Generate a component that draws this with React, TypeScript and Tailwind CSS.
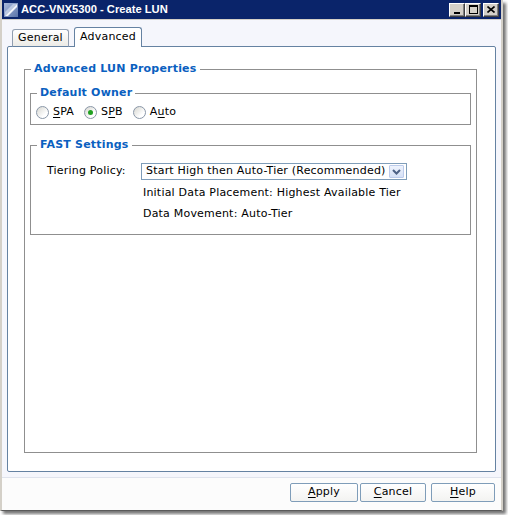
import React from 'react';

const Radio = ({ checked }: { checked?: boolean }) => (
  <span className="flex h-[13px] w-[13px] items-center justify-center rounded-full border border-[#8a97a8] bg-[linear-gradient(135deg,#d6d6d0,#ffffff_70%)]">
    {checked && <span className="h-[5px] w-[5px] rounded-full bg-[#21a121]" />}
  </span>
);

const CaptionButton = ({ children, className = '' }: { children: React.ReactNode; className?: string }) => (
  <div
    className={`flex h-[14px] w-[16px] items-center justify-center border border-b-[#404040] border-l-white border-r-[#404040] border-t-white bg-[#d4d0c8] shadow-[inset_-1px_-1px_#808080] ${className}`}
  >
    {children}
  </div>
);

const Accel = ({ children }: { children: React.ReactNode }) => (
  <span className="underline underline-offset-[2px]">{children}</span>
);

const FooterButton = ({ w, children }: { w: string; children: React.ReactNode }) => (
  <button
    className={`${w} flex h-[19px] items-center justify-center rounded-[2px] border border-[#7f9db9] bg-[linear-gradient(#ffffff,#f3f3f1)] text-black`}
  >
    {children}
  </button>
);

export default function App() {
  return (
    <div className="h-[515px] w-[508px] bg-white font-['DejaVu_Sans',sans-serif] text-[11px] tracking-[0.2px] text-black">
      <div className="flex h-[511px] w-[503px] flex-col border-b border-l-2 border-r-2 border-b-[#5a5a5a] border-l-[#d4d0c8] border-r-[#d4d0c8] shadow-[3px_3px_3px_rgba(0,0,0,0.55)]">
        {/* Title bar */}
        <div className="flex h-[19px] items-center bg-[#0a246a] pl-px pr-[2px]">
          <svg width="14" height="14" viewBox="0 0 14 14" className="ml-[1px] mr-[3px]">
            <defs>
              <linearGradient id="ic" x1="0" y1="0" x2="1" y2="1">
                <stop offset="0" stopColor="#a9b9dc" />
                <stop offset="1" stopColor="#5a73a8" />
              </linearGradient>
            </defs>
            <rect x="0" y="0" width="14" height="14" fill="url(#ic)" />
            <polygon points="1,13 13,1 13,4 4,13" fill="#ffffff" opacity="0.9" />
            <polygon points="1,13 1,9 9,1 13,1" fill="#e6ecf8" opacity="0.55" />
          </svg>
          <span className="font-['Liberation_Sans',sans-serif] text-[11.2px] font-bold tracking-normal text-white">
            ACC-VNX5300 - Create LUN
          </span>
          <div className="ml-auto flex items-center">
            <CaptionButton>
              <svg width="8" height="8" viewBox="0 0 8 8">
                <rect x="1" y="6" width="6" height="2" fill="#000" />
              </svg>
            </CaptionButton>
            <CaptionButton>
              <svg width="9" height="9" viewBox="0 0 9 9">
                <rect x="0.5" y="0.5" width="8" height="8" fill="none" stroke="#000" />
                <rect x="0" y="0" width="9" height="2" fill="#000" />
              </svg>
            </CaptionButton>
            <CaptionButton className="ml-[2px]">
              <svg width="8" height="7" viewBox="0 0 8 7">
                <path d="M0.5 0.5 L7.5 6.5 M7.5 0.5 L0.5 6.5" stroke="#000" strokeWidth="1.6" />
              </svg>
            </CaptionButton>
          </div>
        </div>
        <div className="h-px bg-[#d4d0c8]" />

        {/* Body */}
        <div className="flex flex-1 flex-col bg-[#f5f6fc] px-[5px] pb-[5px] pt-[7px]">
          {/* Tabs */}
          <div className="relative z-10 -mb-px flex h-[20px] items-end pl-[5px]">
            <div className="flex h-[18px] w-[57px] items-center justify-center rounded-t-[3px] border border-[#919eb0] border-b-[#6582a2] bg-[linear-gradient(#ffffff,#ecebe6)]">
              General
            </div>
            <div className="ml-[5px] flex h-[20px] w-[68px] items-start justify-center rounded-t-[3px] border border-b-0 border-[#6582a2] bg-white pt-[1px]">
              Advanced
            </div>
          </div>

          {/* Panel */}
          <div className="flex-1 rounded-[2px] border border-[#6582a2] bg-white px-[16px] pt-[15px]">
            <fieldset className="h-[391px] w-[453px] border border-[#8f8f8f]">
              <legend className="ml-[6px] px-[3px] font-bold leading-[14px] text-[#0a60c0]">
                Advanced LUN Properties
              </legend>

              <fieldset className="mx-[5px] mt-[10px] border border-[#8f8f8f] pb-[4px]">
                <legend className="ml-[6px] px-[3px] font-bold leading-[14px] text-[#0a60c0]">Default Owner</legend>
                <div className="mt-[5px] flex h-[15px] items-center pl-[5px]">
                  <Radio />
                  <span className="ml-[4px]">
                    <Accel>S</Accel>PA
                  </span>
                  <span className="ml-[10px]">
                    <Radio checked />
                  </span>
                  <span className="ml-[4px]">
                    S<Accel>P</Accel>B
                  </span>
                  <span className="ml-[10px]">
                    <Radio />
                  </span>
                  <span className="ml-[4px]">
                    A<Accel>u</Accel>to
                  </span>
                </div>
              </fieldset>

              <fieldset className="mx-[5px] mt-[13px] border border-[#8f8f8f] pb-[13px]">
                <legend className="ml-[6px] px-[3px] font-bold leading-[14px] text-[#0a60c0]">FAST Settings</legend>
                <div className="mt-[11px] flex items-center pl-[16px]">
                  <span className="w-[94px]">Tiering Policy:</span>
                  <div className="flex h-[17px] w-[266px] items-center border border-[#7f9db9] bg-white pl-[4px] pr-[2px]">
                    <span className="flex-1 whitespace-nowrap">Start High then Auto-Tier (Recommended)</span>
                    <div className="flex h-[13px] w-[15px] items-center justify-center rounded-[1px] border border-[#bccbeb] bg-[linear-gradient(#eef3fd,#d5e0f6)]">
                      <svg width="9" height="6" viewBox="0 0 9 6">
                        <path d="M1 1 L4.5 4.5 L8 1" stroke="#4d6185" strokeWidth="2" fill="none" />
                      </svg>
                    </div>
                  </div>
                </div>
                <div className="ml-[112px] mt-[6px] leading-[14px]">Initial Data Placement: Highest Available Tier</div>
                <div className="ml-[112px] mt-[7px] leading-[14px]">Data Movement: Auto-Tier</div>
              </fieldset>
            </fieldset>
          </div>
        </div>

        {/* Footer */}
        <div className="flex h-[33px] items-start justify-end border-t border-[#dfe3ed] bg-[#fcfcfc] pr-[6px] pt-[5px]">
          <FooterButton w="w-[68px]">
            <Accel>A</Accel>pply
          </FooterButton>
          <div className="ml-[2px]">
            <FooterButton w="w-[66px]">
              <Accel>C</Accel>ancel
            </FooterButton>
          </div>
          <div className="ml-[5px]">
            <FooterButton w="w-[64px]">
              <Accel>H</Accel>elp
            </FooterButton>
          </div>
        </div>
      </div>
    </div>
  );
}
